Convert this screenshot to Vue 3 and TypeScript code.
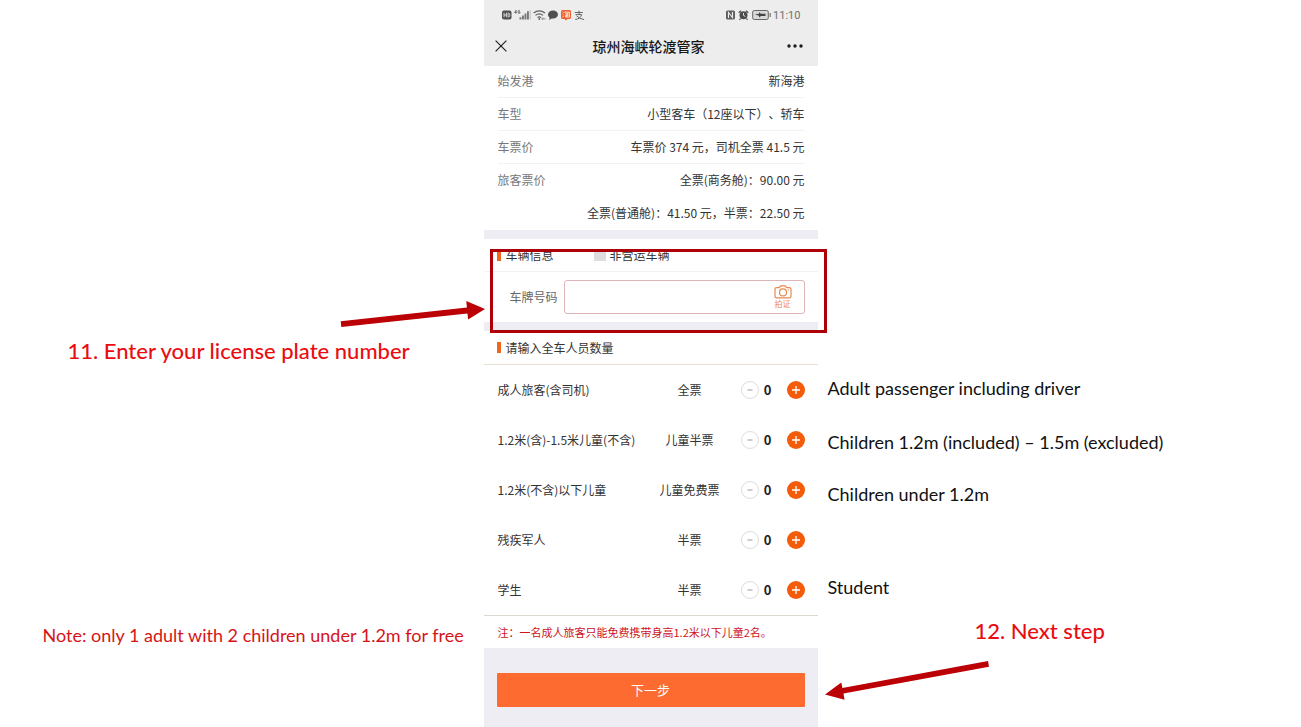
<script setup lang="ts">
import { reactive, ref } from 'vue'

interface InfoRow {
  label: string
  value: string
  joined?: boolean
}

interface Passenger {
  id: string
  name: string
  ticket: string
  count: number
}

const info: InfoRow[] = [
  { label: '始发港', value: '新海港' },
  { label: '车型', value: '小型客车（12座以下）、轿车' },
  { label: '车票价', value: '车票价 374 元，司机全票 41.5 元' },
  { label: '旅客票价', value: '全票(商务舱)：90.00 元', joined: true },
  { label: '', value: '全票(普通舱)：41.50 元，半票：22.50 元', joined: true },
]

const passengers = reactive<Passenger[]>([
  { id: 'adult', name: '成人旅客(含司机)', ticket: '全票', count: 0 },
  { id: 'child-half', name: '1.2米(含)-1.5米儿童(不含)', ticket: '儿童半票', count: 0 },
  { id: 'child-free', name: '1.2米(不含)以下儿童', ticket: '儿童免费票', count: 0 },
  { id: 'veteran', name: '残疾军人', ticket: '半票', count: 0 },
  { id: 'student', name: '学生', ticket: '半票', count: 0 },
])

const plate = ref('')
const nonCommercial = ref(false)

function step(p: Passenger, delta: number) {
  p.count = Math.max(0, p.count + delta)
}
</script>

<template>
  <div class="page">
    <main class="phone">
      <header class="top">
        <div class="status">
          <div class="status-group">
            <svg width="86" height="14" viewBox="0 0 86 14" aria-hidden="true">
              <rect x="1" y="2.500" width="9.500" height="9" rx="2" fill="#505050" />
              <path d="M3 4.800v4.400M5.400 4.800v4.400M3 7h2.400M7 5.100v3.900h.6q1.300-.2 1.300-1.900t-1.300-2z" fill="none" stroke="#ededed" stroke-width=".8" />
              <path d="M15.200 2.200l-1.700 2.300h2.200M15 2.200v3.400M19 2.800q-2-1-2 1.100t2 1.200V4h-.9" fill="none" stroke="#666" stroke-width=".9" />
              <path d="M18.500 9.200h1.900v2.300h-1.900zM21 7.500h1.900v4H21zM23.500 5.500h1.900v6h-1.900zM26 3.300h1.900v8.200H26z" fill="#777" />
              <path d="M28.700 2.300h1v9.200h-1z" fill="#bbb" />
              <path d="M32.600 5q5.700-4.400 11.400 0M34.500 7.400q3.800-3 7.600 0M36.500 9.500q1.800-1.400 3.600 0" fill="none" stroke="#606060" stroke-width="1.200" />
              <circle cx="38.300" cy="11" r=".9" fill="#606060" />
              <path d="M41 10.800h3.500M42 9.500l-1.200 1.300L42 12" fill="none" stroke="#777" stroke-width=".8" />
              <path d="M52 2.500c3 0 5 1.700 5 4s-2 4-5 4l-1.200-.1L48 12.100l.7-2.400C47.500 8.900 47 7.700 47 6.500c0-2.300 2-4 5-4z" fill="#505050" />
              <path d="M61.500 2h7q1.500 0 1.500 1.500v6q0 1.500-1.500 1.500h-2L65 12.500 63.500 11h-2Q60 11 60 9.500v-6Q60 2 61.500 2z" fill="#ee6230" />
              <path d="M61.600 3.700l1 .8M61.400 5.900l1 .7M61.600 9.300l1.300-1.600M64.500 3.200l-.8 1.700M64.400 4.100h4v5h-1M64.500 5.700h3M64.300 7.200h3.400M66 5.700v3M64.600 7.700v1.200h2.700" fill="none" stroke="#fff" stroke-width=".8" />
              <path d="M73.800 4.500h8M78 2.600v4M74.500 6.600h6.200q-1.600 4.600-6.500 4.800M75.500 7.800q3 3 7.600 3.800" fill="none" stroke="#666" />
            </svg>
          </div>
          <div class="status-group">
            <svg width="48" height="14" viewBox="0 0 48 14" aria-hidden="true">
              <rect x="1" y="2.500" width="9" height="9" rx="1.500" fill="#606060" />
              <path d="M3.500 10V4.500l4 5V4" fill="none" stroke="#ededed" stroke-width="1.100" />
              <circle cx="18.500" cy="7.200" r="4" fill="#4c4c4c" />
              <path d="M13.700 4.800l2.200-2M23.300 4.800l-2.200-2M15.500 10.500l-1 1.300M21.500 10.500l1 1.300" stroke="#4c4c4c" stroke-width="1.200" />
              <path d="M18.500 4.900v2.500l1.800 1" fill="none" stroke="#ededed" stroke-width=".9" />
              <rect x="27.700" y="2.500" width="15.600" height="9" rx="1.600" fill="#d8d8d8" stroke="#666" />
              <path d="M44.600 5h1.200v4h-1.200z" fill="#777" />
              <path d="M30 6.500l4-.8V4.300l2 1.400h4.500V8H36l-2 1.400V7.800z" fill="#444" />
            </svg>
            <span class="clock">11:10</span>
          </div>
        </div>
        <div class="nav">
          <button class="icon-button" type="button" aria-label="关闭">
            <svg width="12" height="12" viewBox="0 0 12 12"><path d="M.6.6l10.800 10.800M11.400.6L.6 11.400" stroke="#222" stroke-width="1.200" /></svg>
          </button>
          <h1>琼州海峡轮渡管家</h1>
          <button class="icon-button more" type="button" aria-label="更多">
            <svg width="16" height="4" viewBox="0 0 16 4" fill="#1c1c1c"><circle cx="2" cy="2" r="1.700" /><circle cx="8" cy="2" r="1.700" /><circle cx="14" cy="2" r="1.700" /></svg>
          </button>
        </div>
      </header>

      <dl class="info">
        <div v-for="row in info" :key="row.value" class="info-row" :class="{ joined: row.joined }">
          <dt>{{ row.label }}</dt>
          <dd>{{ row.value }}</dd>
        </div>
      </dl>

      <section class="panel">
        <div class="panel-title vehicle">
          <h2>车辆信息</h2>
          <label class="tick"><input v-model="nonCommercial" type="checkbox" />非营运车辆</label>
        </div>
        <div class="plate">
          <label for="plate">车牌号码</label>
          <div class="plate-box">
            <input id="plate" v-model="plate" type="text" />
            <button type="button" class="camera">
              <svg width="18" height="14" viewBox="0 0 18 14" fill="none" stroke="#ea8850" stroke-width="1.200" aria-hidden="true">
                <path d="M2.700 2.600h2.500L6.600.8h4.800l1.400 1.800h2.500q1.700 0 1.700 1.600v7q0 1.600-1.700 1.600H2.700Q1 12.800 1 11.200v-7q0-1.600 1.700-1.600z" />
                <circle cx="9" cy="7.400" r="3.500" />
                <path d="M14 5h1" />
              </svg>
              <span>拍证</span>
            </button>
          </div>
        </div>
      </section>

      <section class="panel">
        <div class="panel-title count-title"><h2>请输入全车人员数量</h2></div>
        <ul class="passengers">
          <li v-for="p in passengers" :key="p.id">
            <span>{{ p.name }}</span>
            <span class="ticket">{{ p.ticket }}</span>
            <div class="stepper">
              <button type="button" class="minus" :aria-label="p.name + ' 减少'" @click="step(p, -1)">
                <svg width="6" height="6" viewBox="0 0 6 6"><path d="M.5 3h5" stroke="#999" /></svg>
              </button>
              <output>{{ p.count }}</output>
              <button type="button" class="plus" :aria-label="p.name + ' 增加'" @click="step(p, 1)">
                <svg width="8" height="8" viewBox="0 0 8 8"><path d="M0 4h8M4 0v8" stroke="#fff" stroke-width="1.300" /></svg>
              </button>
            </div>
          </li>
        </ul>
        <p class="note">注：一名成人旅客只能免费携带身高1.2米以下儿童2名。</p>
      </section>

      <footer class="actions"><button type="button" class="next">下一步</button></footer>

      <!-- Guide callouts pinned over the form -->
      <div class="frame"></div>
      <svg class="arrow arrow-plate" width="146" height="28" viewBox="0 0 146 28" fill="#bb0006" aria-hidden="true">
        <path d="M.7 21.200l126.200-13.600-.6-6.600L145 9l-16.900 10.500-.6-6L1.300 27z" />
      </svg>
      <svg class="arrow arrow-next" width="166" height="40" viewBox="0 0 166 40" fill="#bb0006" aria-hidden="true">
        <path d="M163 1l1 5.800L18.500 33.600l1 6.200L0 34.500l16.300-12 1.100 5.400z" />
      </svg>
      <p class="callout heading step-plate">11. Enter your license plate number</p>
      <p class="callout red free-note">Note: only 1 adult with 2 children under 1.2m for free</p>
      <p class="callout adult">Adult passenger including driver</p>
      <p class="callout child-half">Children 1.2m (included) – 1.5m (excluded)</p>
      <p class="callout child-free">Children under 1.2m</p>
      <p class="callout student">Student</p>
      <p class="callout heading step-next">12. Next step</p>
    </main>
  </div>
</template>

<style>
body {
  background: #fff;
}
</style>

<style scoped>
.page {
  display: flex;
  justify-content: center;
  min-height: 100vh;
  overflow: hidden;
  font-family: "Noto Sans CJK SC", sans-serif;
  font-size: 12px;
  line-height: 18px;
  color: #333;
  text-spacing-trim: space-all;
}
.page * {
  box-sizing: border-box;
}
button,
input {
  font: inherit;
  margin: 0;
  padding: 0;
  border: 0;
  background: none;
}
button {
  display: inline-flex;
  align-items: center;
  justify-content: center;
  cursor: pointer;
}
h1,
h2,
p,
dl,
dd,
ul {
  margin: 0;
  padding: 0;
}
svg {
  display: block;
}
.phone {
  position: relative;
  flex: 0 0 334px;
  display: flex;
  flex-direction: column;
  background: #eeedf3;
}
.top {
  background: #ededed;
}
.status {
  display: flex;
  justify-content: space-between;
  padding: 8px 17px 0;
  height: 28px;
}
.status-group {
  display: flex;
  height: 14px;
  align-items: center;
}
.clock {
  padding-top: 2px;
  font-family: Roboto, sans-serif;
  font-size: 11px;
  line-height: 14px;
  color: #707070;
}
.nav {
  display: grid;
  grid-template-columns: 1fr auto 1fr;
  align-items: center;
  height: 38px;
  padding: 0 15px 2px 11px;
}
.icon-button {
  justify-self: start;
}
.icon-button.more {
  justify-self: end;
}
h1 {
  font-size: 14px;
  line-height: 20px;
  font-weight: 500;
  color: #181818;
}
.info {
  padding: 0 13px 0 14px;
  background: #fff;
}
.info-row {
  display: flex;
  justify-content: space-between;
  align-items: center;
  height: 33px;
  border-bottom: 1px solid #f3f3f3;
}
.info-row:first-child {
  height: 32px;
  padding-bottom: 2px;
}
.info-row.joined {
  border-bottom-color: transparent;
}
dt {
  color: #777;
}
.panel {
  background: #fff;
}
.info + .panel {
  margin: 9px 0;
}
.panel-title {
  display: flex;
  align-items: center;
  height: 33px;
  padding: 0 13px;
  border-bottom: 1px solid #f3f3f3;
}
.panel-title h2 {
  display: flex;
  align-items: center;
  gap: 5px;
  font-size: 12px;
  font-weight: 400;
}
.panel-title h2::before {
  content: "";
  width: 4px;
  height: 11px;
  background: #f0661f;
}
.vehicle {
  gap: 40px;
}
.count-title {
  height: 34px;
  border-bottom-color: #e6dfd2;
}
.tick {
  display: flex;
  align-items: center;
  gap: 4px;
}
.tick input {
  appearance: none;
  width: 12px;
  height: 12px;
  background: #dedede;
}
.tick input:checked {
  background: #f0661f;
}
.plate {
  display: flex;
  align-items: center;
  gap: 6px;
  height: 50px;
  padding: 0 13px 0 26px;
  color: #666;
}
.plate-box {
  flex: 1;
  display: flex;
  align-items: center;
  height: 34px;
  border: 1px solid #dfb4b8;
  border-radius: 3px;
}
.plate-box input {
  flex: 1;
  min-width: 0;
  height: 32px;
  padding: 0 8px;
  outline: none;
}
.camera {
  flex-direction: column;
  width: 42px;
  height: 32px;
  color: #ea8850;
  font-size: 8px;
  line-height: 10px;
}
.passengers {
  list-style: none;
  border-bottom: 1px solid #ddd8d0;
}
.passengers li {
  display: grid;
  grid-template-columns: 1fr 82px 64px;
  column-gap: 10px;
  align-items: center;
  height: 50px;
  padding: 0 13px 0 14px;
  white-space: nowrap;
}
.ticket {
  text-align: center;
}
.stepper {
  display: flex;
  align-items: center;
}
.stepper button {
  width: 18px;
  height: 18px;
  border-radius: 50%;
}
.stepper output {
  width: 18px;
  text-align: center;
  font-size: 13px;
  font-weight: 700;
  color: #222;
}
.stepper .minus {
  border: 1px solid #ddd;
}
.stepper .plus {
  margin-left: auto;
  background: #f35c0b;
}
.note {
  padding: 7px 13px 7px 14px;
  font-size: 11px;
  color: #cc141c;
}
.actions {
  padding: 25px 13px 20px;
}
.next {
  width: 100%;
  height: 34px;
  border-radius: 1px;
  background: #fd6b30;
  color: #fff;
  font-size: 13px;
}
.frame {
  position: absolute;
  left: 6px;
  top: 249px;
  width: 337px;
  height: 84px;
  border: 3px solid #ae0008;
  pointer-events: none;
}
.arrow,
.callout {
  position: absolute;
}
.arrow-plate {
  left: -144px;
  top: 300px;
}
.arrow-next {
  left: 341px;
  top: 660px;
}
.callout {
  font-family: Lato, sans-serif;
  font-size: 18px;
  line-height: 24px;
  color: #111;
  white-space: nowrap;
}
.heading {
  font-size: 22px;
  line-height: 30px;
  font-weight: 500;
  color: #e90d12;
}
.red {
  color: #d61418;
}
.step-plate {
  left: -416px;
  top: 336px;
}
.free-note {
  left: -441px;
  top: 623px;
}
.adult {
  left: 344px;
  top: 376px;
}
.child-half {
  left: 344px;
  top: 430px;
}
.child-free {
  left: 344px;
  top: 482px;
}
.student {
  left: 344px;
  top: 575px;
}
.step-next {
  left: 491px;
  top: 616px;
}
</style>
